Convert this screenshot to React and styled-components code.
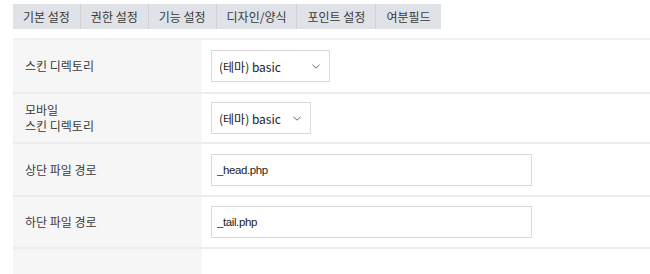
import styled, { createGlobalStyle } from "styled-components";
import React from "react";

const Global = createGlobalStyle`
  body {
    margin: 0;
    background: #fff;
    font-family: "Noto Sans CJK KR", "Noto Sans", sans-serif;
    color: #333;
  }
`;

const Page = styled.div`
  padding: 4px 0 0 13px;
`;

const TabBar = styled.ul`
  display: flex;
  list-style: none;
  margin: 0 0 9px;
  padding: 0;
`;

const Tab = styled.li`
  height: 25px;
  line-height: 25px;
  padding: 0 10px;
  font-size: 12px;
  color: #3a3a3a;
  background: #dfe2e6;
  border-right: 1px solid #ced3d8;
  &:last-child {
    border-right: none;
  }
`;

const Table = styled.div`
  border-top: 2px solid #f0f0f0;
`;

const Row = styled.div`
  display: grid;
  grid-template-columns: 189px 1fr;
  min-height: ${(p) => p.h}px;
  border-bottom: ${(p) => (p.last ? "none" : "2px solid #ececec")};
`;

const Label = styled.div`
  background: #f6f6f6;
  padding: 0 12px;
  font-size: 12px;
  line-height: 16px;
  color: #3a3a3a;
  display: flex;
  align-items: center;
`;

const Cell = styled.div`
  display: flex;
  align-items: center;
  padding: 0 9px;
`;

const SelectBox = styled.div`
  width: ${(p) => p.w}px;
  height: 32px;
  box-sizing: border-box;
  border: 1px solid #dadada;
  background: #fff;
  display: flex;
  align-items: center;
  justify-content: space-between;
  padding: 0 9px 0 7px;
  font-size: 12px;
  color: #222;
`;

const TextInput = styled.input`
  width: 321px;
  height: 32px;
  box-sizing: border-box;
  border: 1px solid #dadada;
  padding: 0 5px;
  font-family: "Liberation Sans", "Noto Sans CJK KR", sans-serif;
  font-size: 11.5px;
  letter-spacing: -0.4px;
  color: #222;
  outline: none;
`;

const Chevron = () => (
  <svg width="8" height="5" viewBox="0 0 8 5">
    <path d="M0.5 0.8l3.5 3.4 3.5-3.4" fill="none" stroke="#666" strokeWidth="1" />
  </svg>
);

const tabs = ["기본 설정", "권한 설정", "기능 설정", "디자인/양식", "포인트 설정", "여분필드"];

export default function App() {
  return (
    <Page>
      <Global />
      <TabBar>
        {tabs.map((t) => (
          <Tab key={t}>{t}</Tab>
        ))}
      </TabBar>
      <Table>
        <Row h={52}>
          <Label>스킨 디렉토리</Label>
          <Cell>
            <SelectBox w={119}>
              (테마) basic <Chevron />
            </SelectBox>
          </Cell>
        </Row>
        <Row h={48}>
          <Label>
            모바일
            <br />
            스킨 디렉토리
          </Label>
          <Cell>
            <SelectBox w={100}>
              (테마) basic <Chevron />
            </SelectBox>
          </Cell>
        </Row>
        <Row h={51}>
          <Label>상단 파일 경로</Label>
          <Cell>
            <TextInput defaultValue="_head.php" />
          </Cell>
        </Row>
        <Row h={50}>
          <Label>하단 파일 경로</Label>
          <Cell>
            <TextInput defaultValue="_tail.php" />
          </Cell>
        </Row>
        <Row h={30} last>
          <Label />
          <Cell />
        </Row>
      </Table>
    </Page>
  );
}
